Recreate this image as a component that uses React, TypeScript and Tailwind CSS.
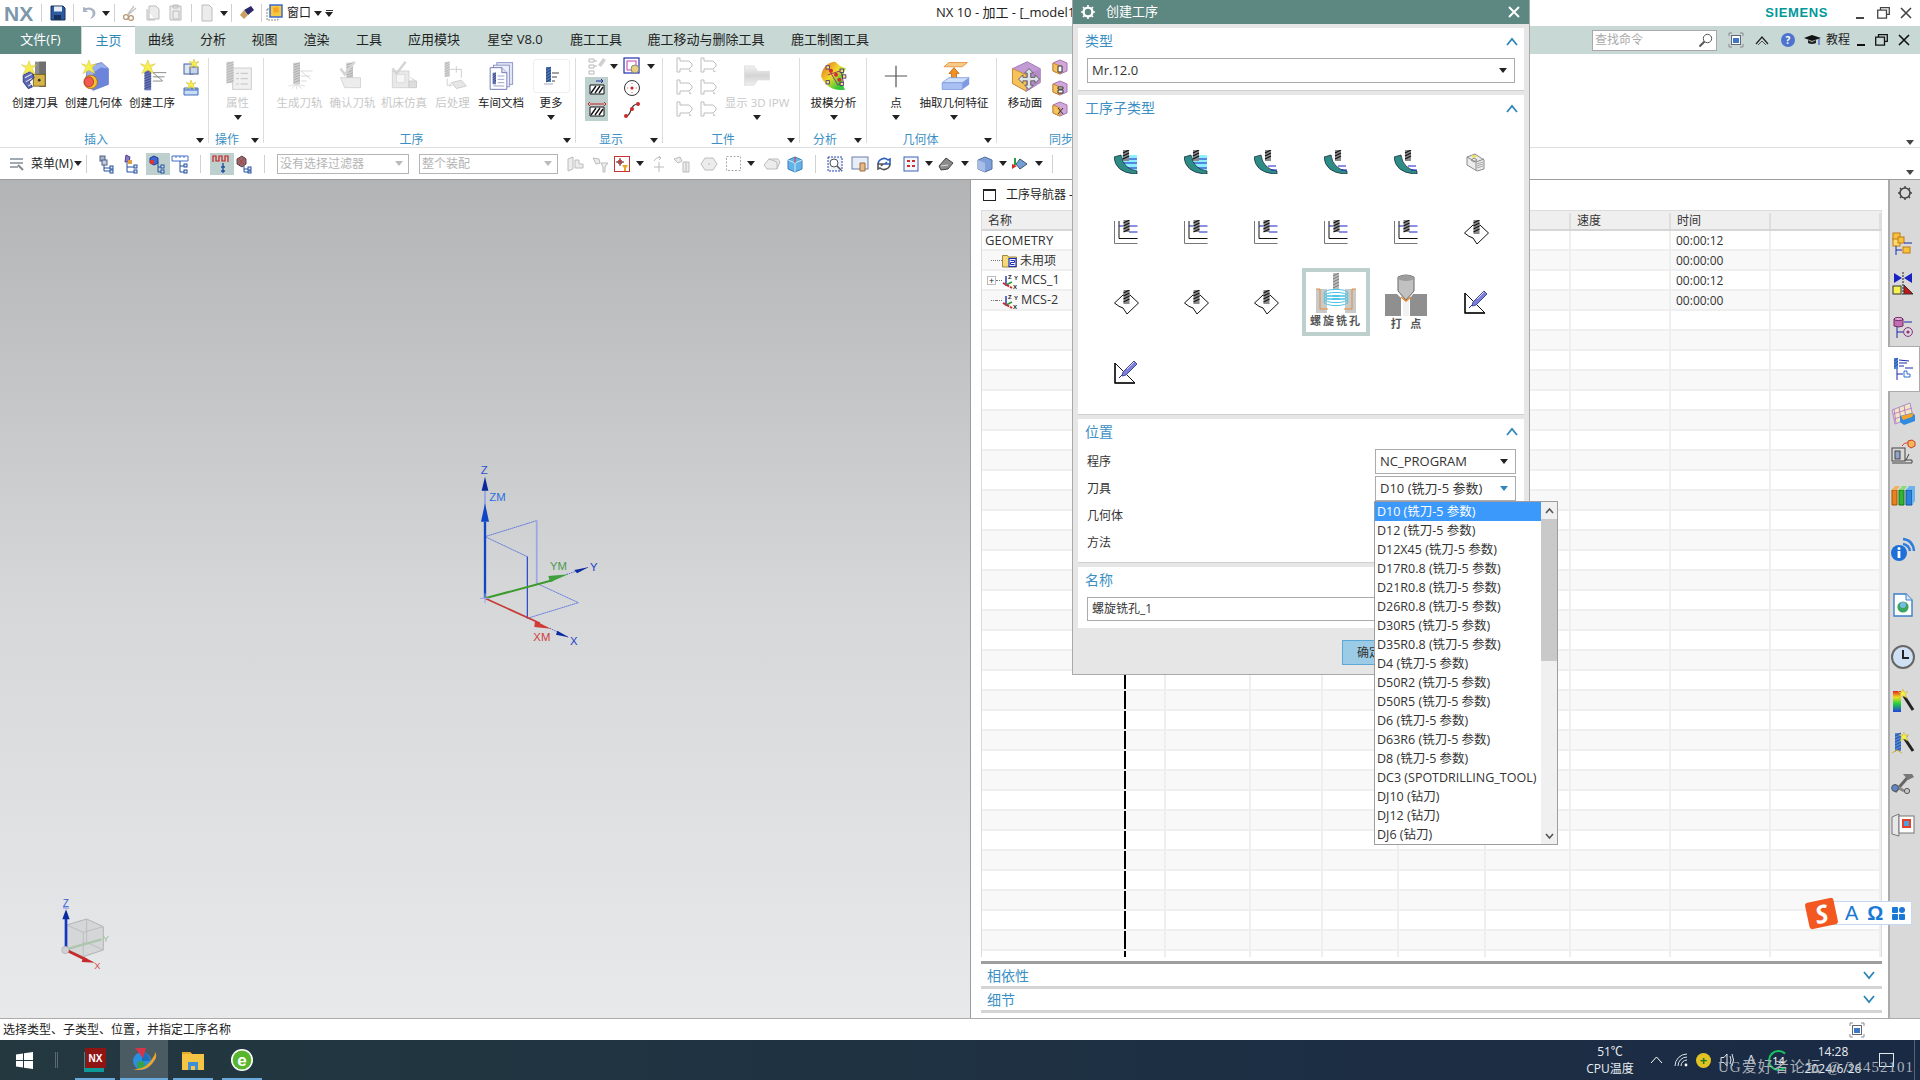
import type { ReactNode } from "react";

type Box = { className?: string; children?: ReactNode };

const toolItems = [
  "D10 (铣刀-5 参数)",
  "D12 (铣刀-5 参数)",
  "D12X45 (铣刀-5 参数)",
  "D17R0.8 (铣刀-5 参数)",
  "D21R0.8 (铣刀-5 参数)",
  "D26R0.8 (铣刀-5 参数)",
  "D30R5 (铣刀-5 参数)",
  "D35R0.8 (铣刀-5 参数)",
  "D4 (铣刀-5 参数)",
  "D50R2 (铣刀-5 参数)",
  "D50R5 (铣刀-5 参数)",
  "D6 (铣刀-5 参数)",
  "D63R6 (铣刀-5 参数)",
  "D8 (铣刀-5 参数)",
  "DC3 (SPOTDRILLING_TOOL)",
  "DJ10 (钻刀)",
  "DJ12 (钻刀)",
  "DJ6 (钻刀)",
];

const tabs = [
  { label: "曲线", w: "w-[52px]" },
  { label: "分析", w: "w-[52px]" },
  { label: "视图", w: "w-[51px]" },
  { label: "渲染", w: "w-[53px]" },
  { label: "工具", w: "w-[52px]" },
  { label: "应用模块", w: "w-[78px]" },
  { label: "星空 V8.0", w: "w-[84px]" },
  { label: "鹿工工具", w: "w-[78px]" },
  { label: "鹿工移动与删除工具", w: "w-[142px]" },
  { label: "鹿工制图工具", w: "w-[106px]" },
];

const columns = [
  "w-[144px] border-r-black",
  "w-[40px]",
  "w-[85px]",
  "w-[72px]",
  "w-[76px]",
  "w-[87px]",
  "w-[85px]",
  "w-[100px]",
  "w-[100px]",
  "w-[110px]",
];

const times = ["00:00:12", "00:00:00", "00:00:12", "00:00:00"];
const rows = Array.from({ length: 37 }, (_, i) => i);

function Caret({ color = "#222" }: { color?: string }) {
  return (
    <svg width="8" height="5" viewBox="0 0 8 5" className="shrink-0">
      <path d="M0 0h8L4 5z" fill={color} />
    </svg>
  );
}

function Slot({ className = "", children }: Box) {
  return <div className={`flex shrink-0 items-center justify-center ${className}`}>{children}</div>;
}

function Chevron({ up }: { up?: boolean }) {
  return (
    <svg width="12" height="9" viewBox="0 0 12 9" className="shrink-0">
      <path d={up ? "M1 8l5-6 5 6" : "M1 1l5 6 5-6"} fill="none" stroke="#2f87b8" strokeWidth="1.8" />
    </svg>
  );
}

function Ico({ s = 20, v = 20, children, className }: { s?: number; v?: number; children: ReactNode; className?: string }) {
  return (
    <svg width={s} height={s} viewBox={`0 0 ${v} ${v}`} className={`shrink-0 ${className ?? ""}`}>
      {children}
    </svg>
  );
}

function Star({ x, y, r = 6 }: { x: number; y: number; r?: number }) {
  return (
    <path
      d={`M${x} ${y - r}L${x + r * 0.25} ${y - r * 0.3}L${x + r} ${y - r * 0.5}L${x + r * 0.4} ${y}L${x + r * 0.8} ${y + r * 0.8}L${x} ${y + r * 0.35}L${x - r * 0.8} ${y + r * 0.8}L${x - r * 0.4} ${y}L${x - r} ${y - r * 0.5}L${x - r * 0.25} ${y - r * 0.3}Z`}
      fill="#f7ef4d"
      stroke="#c9b52a"
      strokeWidth="0.5"
    />
  );
}

function Mill({ x, y, w = 6, h = 20, color = "#6a78b8", line = "#2d3570", weight = 0.8 }: { x: number; y: number; w?: number; h?: number; color?: string; line?: string; weight?: number }) {
  const n = Math.floor(h / 3);
  return (
    <g>
      <rect x={x} y={y} width={w} height={h} fill={color} />
      {Array.from({ length: n }, (_, i) => (
        <path key={i} d={`M${x} ${y + i * 3 + 3}L${x + w} ${y + i * 3}`} stroke={line} strokeWidth={weight} />
      ))}
    </g>
  );
}

function CreateToolIcon() {
  return (
    <Ico s={32} v={38}>
      <rect x="19" y="2" width="13" height="16" fill="#8d8d8d" />
      <rect x="24" y="2" width="8" height="30" fill="#6f6f6f" />
      <rect x="17" y="17" width="14" height="14" fill="#d8b54a" stroke="#6b5a1a" />
      <circle cx="24" cy="24" r="1.6" fill="#333" />
      <path d="M5 18l10-5 3 8-6 5 4 6-5 2-6-8z" fill="#5b66b4" stroke="#2b3470" />
      <path d="M7 21l8-4M8 26l7-4M11 31l4-3" stroke="#e8e8f5" strokeWidth="1.2" />
      <Star x={12} y={10} r={9} />
    </Ico>
  );
}

function CreateGeomIcon() {
  return (
    <Ico s={32} v={38}>
      <path d="M11 8l17-5 8 7v19l-18 7-9-7z" fill="#9ab0ec" stroke="#6c7cc0" />
      <path d="M27 9l9 1v19l-18 7V15z" fill="#6d84dc" />
      <ellipse cx="15" cy="26" rx="8" ry="8" fill="#f4c22d" stroke="#b36a15" />
      <ellipse cx="13" cy="26" rx="5.5" ry="6" fill="#f25c50" stroke="#a33" />
      <Star x={13} y={9} r={9} />
    </Ico>
  );
}

function CreateOperIcon() {
  return (
    <Ico s={32} v={38}>
      <path d="M20 15h16M20 20h14M20 25h11M20 15l12 10" stroke="#777" fill="none" />
      <Mill x={10} y={10} w={8} h={26} />
      <Star x={14} y={9} r={9} />
    </Ico>
  );
}

function GrayMill({ tail }: { tail?: ReactNode }) {
  return (
    <Ico s={30} v={36}>
      <Mill x={10} y={2} w={8} h={26} color="#cfcfcf" line="#9c9c9c" />
      {tail}
    </Ico>
  );
}

function AttrIcon() {
  return (
    <Ico s={32} v={36}>
      <rect x="12" y="9" width="21" height="24" fill="#f0f0f0" stroke="#c9c9c9" />
      <path d="M16 15h3M21 15h8M16 21h3M21 21h8M16 27h3M21 27h8" stroke="#bcbcbc" />
      <Mill x={5} y={2} w={8} h={24} color="#cfcfcf" line="#a8a8a8" />
    </Ico>
  );
}

function ShopDocIcon() {
  return (
    <Ico s={30} v={36}>
      <rect x="13" y="2" width="19" height="26" fill="#e3e6f6" stroke="#7e88c0" />
      <rect x="9" y="5" width="19" height="26" fill="#eef0fb" stroke="#7e88c0" />
      <path d="M5 8h14l6 6v20H5z" fill="#fff" stroke="#5b66a8" />
      <path d="M19 8v6h6" fill="#dfe3f6" stroke="#5b66a8" />
      <path d="M14 18h8M14 22h8M14 26h8M9 30h13" stroke="#8a93c7" />
      <Mill x={8} y={14} w={4} h={14} />
    </Ico>
  );
}

function MoreIcon() {
  return (
    <Ico s={20} v={20}>
      <path d="M11 7h7M11 11h5M11 15h3" stroke="#444" />
      <Mill x={5} y={1} w={5} h={15} color="#4d76b8" line="#20335c" />
      <path d="M3 18h9" stroke="#9ba8c8" />
    </Ico>
  );
}

function DisplayPair({ kind }: { kind: "flow" | "check" | "machine" | "post" }) {
  if (kind === "check")
    return (
      <GrayMill
        tail={
          <>
            <path d="M3 9l5 7L20 1" stroke="#d4d4d4" strokeWidth="3" fill="none" />
            <path d="M3 20h24v12H8z" fill="#ececec" stroke="#d0d0d0" />
          </>
        }
      />
    );
  if (kind === "machine")
    return (
      <Ico s={30} v={36}>
        <path d="M4 12h20v20H4z" fill="#e9e9e9" stroke="#cfcfcf" />
        <path d="M9 16h10v10H9z" fill="#f6f6f6" stroke="#d7d7d7" />
        <path d="M24 24h9v8h-9zM26 20l6 4" fill="#dedede" stroke="#c8c8c8" />
        <path d="M4 9l5 6L20 1" stroke="#d4d4d4" strokeWidth="3" fill="none" />
      </Ico>
    );
  if (kind === "post")
    return (
      <Ico s={30} v={36}>
        <Mill x={8} y={1} w={6} h={18} color="#d3d3d3" line="#a8a8a8" />
        <path d="M14 10h14v10M22 6v8" stroke="#c8c8c8" fill="none" />
        <path d="M16 26l12-3 6 7-12 3z" fill="#e6e6e6" stroke="#c6c6c6" />
        <path d="M11 21v8h5l-2-2m2 2l-2 2" stroke="#c8c8c8" fill="none" />
      </Ico>
    );
  return (
    <GrayMill
      tail={
        <>
          <path d="M19 12h14M19 18h11M19 24h7M19 12l12 10" stroke="#d2d2d2" fill="none" />
          <path d="M4 30l10-2 10 2M14 28v6M8 33l6-5 6 5" stroke="#dadada" fill="none" />
        </>
      }
    />
  );
}

function WorkpieceIcon() {
  return (
    <Ico s={20} v={20}>
      <path d="M2 3h3v3h9l3 3v2l-3 3H5v3H2z" fill="none" stroke="#bdbdbd" />
      <path d="M14 14l3 3-3 0z" fill="#d0d0d0" />
    </Ico>
  );
}

function BigIpw() {
  return (
    <Ico s={28} v={36}>
      <defs>
        <linearGradient id="ipw" x1="0" y1="0" x2="0" y2="1">
          <stop offset="0" stopColor="#f2f2f2" />
          <stop offset="0.5" stopColor="#d4d4d4" />
          <stop offset="1" stopColor="#efefef" />
        </linearGradient>
      </defs>
      <path d="M2 5h12l5 7h15v11H19l-5 7H2z" fill="url(#ipw)" stroke="#dcdcdc" />
    </Ico>
  );
}

function DraftIcon() {
  return (
    <Ico s={33} v={40}>
      <defs>
        <linearGradient id="dr" x1="0" y1="0" x2="1" y2="1">
          <stop offset="0" stopColor="#e25c20" />
          <stop offset="0.45" stopColor="#f2d92c" />
          <stop offset="0.8" stopColor="#35c93b" />
        </linearGradient>
      </defs>
      <path d="M5 20C6 8 15 2 22 2c4 4 8 7 13 8-5 9-5 19-1 26-12 2-24-3-29-16z" fill="url(#dr)" />
      <path d="M13 9l12 21 7-3-3-14-16 5" stroke="#8b1f6c" fill="none" />
      {[[13, 9], [30, 13], [13, 27], [30, 29], [33, 20]].map(([x, y]) => (
        <rect key={`${x}-${y}`} x={x - 2} y={y - 2} width="4" height="4" fill="#f5e66c" stroke="#432a7a" />
      ))}
      <circle cx="23" cy="18" r="2.4" fill="#d52b2b" />
      <circle cx="17" cy="13" r="2.4" fill="#d52b2b" />
      <circle cx="27" cy="24" r="2.4" fill="#d52b2b" />
    </Ico>
  );
}

function PointIcon() {
  return (
    <Ico s={28} v={30}>
      <path d="M15 4v23M3 15h24" stroke="#555" strokeWidth="1.3" />
    </Ico>
  );
}

function ExtractIcon() {
  return (
    <Ico s={32} v={38}>
      <path d="M7 8l6-5h22l-6 5z" fill="#f6cb86" stroke="#e38b3d" />
      <path d="M16 22V16h-3l6-7 6 7h-3v6z" fill="#ef9224" stroke="#c46a10" />
      <path d="M5 27l8-6h24l-8 6z" fill="#cfe0fb" stroke="#7f9be0" />
      <path d="M5 27h24v8H5z" fill="#a9c0f2" stroke="#7f9be0" />
      <path d="M29 27l8-6v8l-8 6z" fill="#7e9ae2" />
    </Ico>
  );
}

function MoveFaceIcon() {
  return (
    <Ico s={33} v={38}>
      <path d="M4 10L21 2l15 8v16l-16 10L4 27z" fill="#c29bd5" stroke="#9d6fb8" />
      <path d="M4 10l16 7v19L4 27z" fill="#f6c25a" stroke="#c98a28" />
      <path d="M20 17l16-7v16L20 36z" fill="#b68cc9" />
      <path d="M23 10l5 5h-3v5h5v-3l5 5-5 5v-3h-5v5h3l-5 5-5-5h3v-5h-5v3l-5-5 5-5v3h5v-5h-3z" fill="#dfe3ea" stroke="#555" />
    </Ico>
  );
}

function MoveFaceSmall({ mark }: { mark: string }) {
  return (
    <Ico s={16} v={16}>
      <path d="M1 4l7-3 7 3v8l-7 3-7-3z" fill="#d1a7d9" stroke="#a474b2" />
      <path d="M1 4l7 3v8l-7-3z" fill="#f6c25a" stroke="#c98a28" />
      <path d={mark} stroke="#333" fill="#fff" />
    </Ico>
  );
}

function BigBtn({ w, icon, label, disabled, caret }: { w: string; icon: ReactNode; label: string; disabled?: boolean; caret?: boolean }) {
  return (
    <div className={`flex shrink-0 flex-col items-center ${w}`}>
      <div className="flex h-[34px] items-center justify-center">{icon}</div>
      <div className={`mt-[2px] h-[16px] whitespace-nowrap text-[11.5px] leading-[16px] ${disabled ? "text-[#c8c8c8]" : "text-[#222]"}`}>{label}</div>
      {caret && (
        <div className="mt-[3px] flex h-[6px] items-center">
          <Caret />
        </div>
      )}
    </div>
  );
}

function Group({ w, label, last, labelClass = "mr-[12px]", children }: { w: string; label: string; last?: boolean; labelClass?: string; children: ReactNode }) {
  return (
    <div className={`my-[4px] flex shrink-0 flex-col ${w} ${last ? "" : "border-r border-[#dcdcdc]"}`}>
      <div className="flex h-[75px] shrink-0">{children}</div>
      <div className="grid h-[14px] shrink-0 grid-cols-[1fr_auto_1fr] items-center pr-[4px]">
        <span />
        <span className={`text-[12px] leading-[14px] text-[#3b8fc4] ${labelClass}`}>{label}</span>
        <span className="justify-self-end">
          <Caret />
        </span>
      </div>
    </div>
  );
}

function NavIcon({ kind }: { kind: number }) {
  if (kind === 1)
    return (
      <Ico s={20} v={20}>
        <rect x="3" y="2" width="5" height="5" fill="#a9b6c9" stroke="#4f5f85" />
        <rect x="5" y="6" width="5" height="5" fill="#c4cedd" stroke="#4f5f85" />
        <path d="M7 11v6h6M7 14h6" stroke="#204f9e" fill="none" />
        <rect x="13" y="12" width="3" height="3" fill="#dfe6f2" stroke="#204f9e" />
        <rect x="13" y="16" width="3" height="3" fill="#dfe6f2" stroke="#204f9e" />
      </Ico>
    );
  if (kind === 2)
    return (
      <Ico s={20} v={20}>
        <path d="M5 1l4 2-1 5H4z" fill="#8e77c6" stroke="#513f8d" />
        <rect x="7" y="6" width="4" height="4" fill="#e0a040" />
        <path d="M6 9v9h7M6 13h7" stroke="#204f9e" fill="none" />
        <rect x="13" y="11" width="3" height="3" fill="#dfe6f2" stroke="#204f9e" />
        <rect x="13" y="16" width="3" height="3" fill="#dfe6f2" stroke="#204f9e" />
      </Ico>
    );
  if (kind === 3)
    return (
      <Ico s={20} v={20}>
        <path d="M2 4l4-2 4 2v5l-4 2-4-2z" fill="#3d67d6" stroke="#1c3b95" />
        <circle cx="4" cy="8" r="2.3" fill="#e0342c" />
        <path d="M10 8v10h4M10 13h4" stroke="#204f9e" fill="none" />
        <rect x="13" y="11" width="3" height="3" fill="#dfe6f2" stroke="#204f9e" />
        <rect x="13" y="16" width="3" height="3" fill="#dfe6f2" stroke="#204f9e" />
      </Ico>
    );
  if (kind === 4)
    return (
      <Ico s={20} v={20}>
        <path d="M1 2h16M1 2v5h16V2M5 2v2M9 2v2M13 2v2" stroke="#3f6ec4" fill="none" />
        <path d="M9 7v11h4M9 12h4" stroke="#204f9e" fill="none" />
        <rect x="13" y="10" width="3" height="3" fill="#dfe6f2" stroke="#204f9e" />
        <rect x="13" y="16" width="3" height="3" fill="#dfe6f2" stroke="#204f9e" />
      </Ico>
    );
  if (kind === 5)
    return (
      <Ico s={22} v={22}>
        <path d="M2 9V3h3v5h3V3h3v5h3V3h3v6" stroke="#c81f1f" fill="none" strokeWidth="1.2" />
        <path d="M12 10v10M10 14h4M10 18h4" stroke="#204f9e" fill="none" strokeWidth="1.4" />
      </Ico>
    );
  return (
    <Ico s={20} v={20}>
      <path d="M2 5l5-3 4 3v5l-4 3-5-3z" fill="#8e6a70" stroke="#5d4347" />
      <path d="M3 4l7 7M10 3L4 11" stroke="#c03838" />
      <path d="M9 12v6h4M9 15h4" stroke="#204f9e" fill="none" />
      <rect x="13" y="13" width="3" height="3" fill="#dfe6f2" stroke="#204f9e" />
      <rect x="13" y="17" width="3" height="2" fill="#dfe6f2" stroke="#204f9e" />
    </Ico>
  );
}

function SmallGray({ d }: { d: string }) {
  return (
    <Ico s={20} v={20}>
      <path d={d} fill="#ececec" stroke="#bcbcbc" />
    </Ico>
  );
}

function Select({ value, active, className = "" }: { value: string; active?: boolean; className?: string }) {
  return (
    <div className={`flex items-center justify-between border border-[#ababab] bg-white pl-[4px] pr-[7px] ${className}`}>
      <span className="whitespace-nowrap text-[13px] text-[#333]">{value}</span>
      <Caret color={active ? "#2f87b8" : "#222"} />
    </div>
  );
}

function SectionHead({ label, open = true, className = "" }: { label: string; open?: boolean; className?: string }) {
  return (
    <div className={`flex items-center justify-between pl-[7px] pr-[6px] ${className}`}>
      <span className="text-[14px] leading-[20px] text-[#3b8fc4]">{label}</span>
      <Chevron up={open} />
    </div>
  );
}

function SubMill({ x = 8, y = 0, h = 11 }: { x?: number; y?: number; h?: number }) {
  return <Mill x={x} y={y} w={6} h={h} color="#8a8a8a" line="#111" weight={1.1} />;
}

const arcPath = "M0 7Q1 22 20 24h3v-3Q9 19 7 5z";

function SubCyan() {
  return (
    <Ico s={24} v={24}>
      <rect x="8" y="5" width="15" height="16" fill="#8ef0ff" />
      <path d="M8 9h15M8 13h15M8 18h15" stroke="#1620c8" />
      <path d={arcPath} fill="#2e8b85" stroke="#123" strokeWidth="0.7" />
      <SubMill x={9} />
    </Ico>
  );
}

function SubArc() {
  return (
    <Ico s={24} v={24}>
      <path d={arcPath} fill="#2e8b85" stroke="#123" strokeWidth="0.7" />
      <path d="M14 16h8M17 20h6" stroke="#1620c8" />
      <SubMill x={11} />
    </Ico>
  );
}

function SubBlock() {
  return (
    <Ico s={20} v={20}>
      <path d="M1 5l8-3 9 6v9l-7 2-10-6z" fill="#ececec" stroke="#8a8a8a" />
      <path d="M1 5l9 5v8M10 10l8-3M5 8l3-2 3 2-3 2z" fill="none" stroke="#8a8a8a" />
      <path d="M5 4l4-1 2 2-3 1z" fill="#eee44a" />
      <path d="M11 12l6-2M11 14l6-2M11 16l6-2" stroke="#a8a8a8" />
    </Ico>
  );
}

function SubPocket() {
  return (
    <Ico s={24} v={24}>
      <path d="M0.5 1v22.5h23" fill="none" stroke="#777" />
      <path d="M5 1v17.5h18.5" fill="none" stroke="#111" />
      <path d="M5 6h4M15 6h8.5M15 12h8.5" stroke="#1620c8" />
      <SubMill x={9.5} h={12} />
    </Ico>
  );
}

function SubDrill() {
  return (
    <Ico s={25} v={25}>
      <path d="M0.5 13L9 5h7l8.5 8L13 24l-4-6q-4-1-8.500-5z" fill="#fff" stroke="#111" />
      <SubMill x={9.5} y={0} h={14} />
    </Ico>
  );
}

function SubPen() {
  return (
    <Ico s={24} v={24}>
      <path d="M1 3l20 20H1z" fill="#fff" stroke="#111" />
      <path d="M1 3v20h20" fill="none" stroke="#111" strokeWidth="1.4" />
      <path d="M5 18l7-7" stroke="#1620c8" />
      <path d="M9 12L20 1l3 3-11 11-4 1z" fill="#7c80d8" stroke="#44479e" />
      <path d="M13 9l7-7" stroke="#dcdcf6" />
    </Ico>
  );
}

function HelixTile() {
  return (
    <svg width="44" height="40" viewBox="0 0 44 40" className="shrink-0">
      <rect x="2" y="16" width="11" height="24" fill="#c9c9c9" />
      <rect x="31" y="16" width="11" height="24" fill="#c9c9c9" />
      <path d="M2 16h4v20h32V16h4" fill="none" stroke="#e08d3e" strokeWidth="1" />
      <rect x="14" y="28" width="16" height="12" fill="#fff" />
      <Mill x={19} y={0} w={6} h={16} color="#bcbcbc" line="#666" />
      {[20, 23, 26, 29].map((y) => (
        <ellipse key={y} cx="22" cy={y} rx="12" ry="3.6" fill="none" stroke="#49c3e6" strokeWidth="1" />
      ))}
    </svg>
  );
}

function SpotTile() {
  return (
    <svg width="42" height="42" viewBox="0 0 42 42" className="shrink-0">
      <path d="M0 20h12l4 4v18H0zM42 20H28l-3 4v18h17z" fill="#8f8f8f" />
      <path d="M14 20h14l-4 6v16h-6V26z" fill="#f2f2f2" />
      <path d="M13 3q8-4 16 0v14l-8 9-8-9z" fill="#c1c1c1" stroke="#666" />
      <ellipse cx="21" cy="4" rx="8" ry="3" fill="#9c9c9c" />
      <path d="M16 23l5 4 5-4" fill="none" stroke="#ea8a2f" strokeWidth="1.4" />
    </svg>
  );
}

function SideIcon({ kind }: { kind: number }) {
  switch (kind) {
    case 0:
      return (
        <Ico s={24} v={24}>
          <rect x="2" y="2" width="7" height="7" fill="#f9c23c" stroke="#c07a10" />
          <rect x="2" y="8" width="7" height="7" fill="#fadc70" stroke="#c07a10" />
          <rect x="7" y="6" width="6" height="6" fill="#f9c23c" stroke="#c07a10" />
          <path d="M5 15v9M5 19h6M13 12h8" stroke="#1b2aa8" fill="none" />
          <rect x="12" y="16" width="7" height="6" fill="#f9c23c" stroke="#c07a10" />
        </Ico>
      );
    case 1:
      return (
        <Ico s={24} v={24}>
          <path d="M3 1l8 5-8 5zM21 1l-8 5 8 5z" fill="#1922c2" />
          <path d="M12 0v24" stroke="#222" strokeDasharray="2 1" />
          <rect x="2" y="14" width="8" height="8" fill="#f6f34f" stroke="#333" />
          <path d="M13 22V13l9 9z" fill="#c81515" stroke="#333" />
        </Ico>
      );
    case 2:
      return (
        <Ico s={24} v={24}>
          <path d="M3 3q5-2 9 0v7q-4 2-9 0z" fill="#c66fb0" stroke="#6e2c69" />
          <ellipse cx="7.5" cy="3" rx="4.5" ry="1.6" fill="#e4aed8" stroke="#6e2c69" />
          <path d="M13 6h8M6 11v11M6 16h6" stroke="#1b2aa8" fill="none" />
          <circle cx="17" cy="16" r="4.4" fill="none" stroke="#8e2e80" />
          <circle cx="17" cy="16" r="1.6" fill="#8e2e80" />
        </Ico>
      );
    case 3:
      return (
        <Ico s={24} v={24}>
          <Mill x={3} y={1} w={4} h={11} color="#4f86d8" line="#1c3b95" />
          <path d="M8 3l10 1M8 6h8M8 9h5M14 11h8M6 12v11M6 17h6" stroke="#1b2aa8" fill="none" />
          <path d="M13 14h3v3h3v3h-6z" fill="#fff" stroke="#2f6ed0" />
        </Ico>
      );
    case 4:
      return (
        <Ico s={26} v={26}>
          <path d="M2 9L20 2l3 14-18 7z" fill="#f1e7c4" stroke="#a98fd0" />
          <path d="M4 8l2 14M9 6l2 14M14 4l2 14M3 13l19-6M4 18l19-6" stroke="#c080c8" />
          <path d="M10 15l12-3 3 2v6l-11 4-4-3z" fill="#2f8be0" />
          <path d="M11 15l13-3-2 4-9 3z" fill="#f5a32a" />
        </Ico>
      );
    case 5:
      return (
        <Ico s={26} v={26}>
          <rect x="2" y="9" width="13" height="13" fill="#d9d9d9" stroke="#444" />
          <rect x="5" y="12" width="5" height="8" fill="#8fa4c8" stroke="#444" />
          <path d="M15 21h7v3H2M19 15l-3 6" stroke="#444" fill="none" />
          <path d="M12 7q2-4 6-3" stroke="#e0451f" fill="none" />
          <path d="M18 2l4-1 3 2v4l-4 2-3-2z" fill="#f7b55a" stroke="#c8432a" />
        </Ico>
      );
    case 6:
      return (
        <Ico s={26} v={26}>
          <path d="M2 8h5v15H2z" fill="#e8821e" stroke="#a85500" />
          <path d="M2 8l3-4h5L7 8z" fill="#f3b064" />
          <path d="M9 8h5v15H9z" fill="#37b237" stroke="#0f7a0f" />
          <path d="M9 8l3-4h5l-3 4z" fill="#88dc78" />
          <path d="M16 8h6v15h-6z" fill="#2a82dd" stroke="#11549b" />
          <path d="M16 8l3-4h6l-3 4zM22 8l3-4v15l-3 4z" fill="#6db4ef" />
        </Ico>
      );
    case 7:
      return (
        <Ico s={26} v={26}>
          <path d="M13 3q10 1 11 12" fill="none" stroke="#2f7ddc" strokeWidth="2.4" />
          <path d="M13 8q6 1 7 7" fill="none" stroke="#2f7ddc" strokeWidth="2.4" />
          <circle cx="9" cy="17" r="8" fill="#1f6fd8" />
          <circle cx="9" cy="12.5" r="1.5" fill="#fff" />
          <rect x="7.6" y="15" width="2.8" height="7" fill="#fff" />
        </Ico>
      );
    case 8:
      return (
        <Ico s={26} v={26}>
          <path d="M4 2h12l6 6v16H4z" fill="#fff" stroke="#3c7fc8" strokeWidth="1.4" />
          <path d="M16 2v6h6" fill="#d6e7f8" stroke="#3c7fc8" />
          <circle cx="13" cy="15" r="5.6" fill="#3aa55c" />
          <circle cx="13" cy="13" r="3" fill="#7ab8e8" />
        </Ico>
      );
    case 9:
      return (
        <Ico s={26} v={26}>
          <circle cx="13" cy="13" r="11" fill="#cfe0f4" stroke="#666" strokeWidth="2" />
          <path d="M13 6v8h6" fill="none" stroke="#222" strokeWidth="2" />
        </Ico>
      );
    case 10:
      return (
        <Ico s={26} v={26}>
          <defs>
            <linearGradient id="rb" x1="0" y1="0" x2="0" y2="1">
              <stop offset="0" stopColor="#e02020" />
              <stop offset="0.3" stopColor="#f0e020" />
              <stop offset="0.6" stopColor="#20d040" />
              <stop offset="1" stopColor="#2040e0" />
            </linearGradient>
          </defs>
          <rect x="3" y="2" width="8" height="21" fill="url(#rb)" />
          <path d="M14 7l9 14" stroke="#222" strokeWidth="3" />
          <Star x={13} y={5} r={5} />
        </Ico>
      );
    case 11:
      return (
        <Ico s={26} v={26}>
          <Mill x={5} y={3} w={6} h={18} color="#4f86d8" line="#1c3b95" />
          <path d="M12 6h6M12 9h4" stroke="#3c78d0" />
          <path d="M2 23l5-3 5 3" stroke="#d8b020" fill="none" />
          <path d="M15 9l8 12" stroke="#222" strokeWidth="3" />
          <Star x={14} y={7} r={5} />
        </Ico>
      );
    case 12:
      return (
        <Ico s={26} v={26}>
          <path d="M5 22l13-15" stroke="#666" strokeWidth="3" />
          <path d="M13 4l9 0 2 3-6 3z" fill="#777" />
          <path d="M4 15l10 6" stroke="#888" strokeWidth="3" />
          <circle cx="5" cy="18" r="3.4" fill="#5f86c8" stroke="#555" />
          <circle cx="17" cy="21" r="2.6" fill="#c8c8c8" stroke="#555" />
        </Ico>
      );
    default:
      return (
        <Ico s={26} v={26}>
          <path d="M2 5l7-3v22l-7-2z" fill="#e8e8e8" stroke="#777" />
          <rect x="9" y="4" width="15" height="17" fill="#fff" stroke="#777" />
          <rect x="12" y="7" width="9" height="9" fill="#e7412c" />
          <rect x="14" y="9" width="5" height="5" fill="#4aa2e0" />
        </Ico>
      );
  }
}

function WinControls({ dark }: { dark?: boolean }) {
  const c = dark ? "#111" : "#444";
  return (
    <div className="flex items-center">
      <Slot className={dark ? "w-[20px]" : "w-[24px]"}>
        <div className={`mt-[9px] h-[2px] w-[8px] ${dark ? "bg-[#111]" : "bg-[#444]"}`} />
      </Slot>
      <Slot className={dark ? "w-[21px]" : "w-[22px]"}>
        <svg width="13" height="12" viewBox="0 0 13 12">
          <path d="M3.5 3V.7h8.8v6.6H9.5M.7 3.2h8.8v8H.7z" fill="none" stroke={c} strokeWidth="1.3" />
        </svg>
      </Slot>
      <Slot className="w-[24px]">
        <svg width="12" height="12" viewBox="0 0 12 12">
          <path d="M1 1l10 10M11 1L1 11" stroke={c} strokeWidth="1.6" />
        </svg>
      </Slot>
    </div>
  );
}

function ScreenIcon() {
  return (
    <svg width="16" height="16" viewBox="0 0 16 16" className="shrink-0">
      <path d="M1 4V1h3M12 1h3v3M15 12v3h-3M4 15H1v-3" fill="none" stroke="#8a8a8a" />
      <rect x="3.5" y="3.5" width="9" height="9" fill="#fff" stroke="#667" />
      <rect x="5" y="6" width="6" height="5" fill="#3d77c8" />
    </svg>
  );
}

function TitleBar() {
  return (
    <div className="flex h-[26px] shrink-0 items-center bg-white">
      <span className="w-[41px] pl-[4px] font-['Liberation_Sans',sans-serif] text-[21px] font-bold leading-none text-[#7d97aa]">NX</span>
      <div className="h-[18px] w-px bg-[#d0d0d0]" />
      <Slot className="w-[31px]">
        <Ico s={16} v={16}>
          <path d="M1 1h12l2 2v12H1z" fill="#2c5aa0" stroke="#16305c" />
          <rect x="4" y="1.5" width="8" height="5" fill="#e6edf7" />
          <rect x="4" y="10" width="7" height="5" fill="#16305c" />
        </Ico>
      </Slot>
      <div className="h-[18px] w-px bg-[#d0d0d0]" />
      <Slot className="w-[28px]">
        <Ico s={16} v={16}>
          <path d="M3 2v5h5L6 5q4-1 6 1 2 4-2 8 7-2 5-8-3-5-9-3z" fill="#a9b3c4" />
        </Ico>
      </Slot>
      <Slot className="w-[8px]">
        <Caret />
      </Slot>
      <div className="ml-[4px] h-[18px] w-px bg-[#d0d0d0]" />
      <Slot className="w-[29px]">
        <Ico s={16} v={16}>
          <path d="M12 1L6 9M14 3L6 10" stroke="#c4c4c4" strokeWidth="1.4" />
          <circle cx="4" cy="12" r="2.4" fill="none" stroke="#b89a7a" strokeWidth="1.4" />
          <circle cx="9" cy="13" r="2.4" fill="none" stroke="#b89a7a" strokeWidth="1.4" />
        </Ico>
      </Slot>
      <Slot className="w-[20px]">
        <SmallGray d="M5 3h7l3 3v10H5zM3 6v11h8" />
      </Slot>
      <Slot className="w-[24px]">
        <SmallGray d="M4 3h11v14H4zM7 2h5v3H7zM7 8h6v8H7z" />
      </Slot>
      <div className="ml-[3px] h-[18px] w-px bg-[#d0d0d0]" />
      <Slot className="w-[27px]">
        <SmallGray d="M6 2h7l3 3v13H6z" />
      </Slot>
      <Slot className="w-[10px]">
        <Caret />
      </Slot>
      <div className="ml-[2px] h-[18px] w-px bg-[#d0d0d0]" />
      <Slot className="w-[29px]">
        <Ico s={18} v={18}>
          <path d="M6 6l7-4 3 4-6 5z" fill="#2a2a6a" />
          <path d="M2 11l4-5 4 5-4 4z" fill="#c9a060" />
        </Ico>
      </Slot>
      <div className="h-[18px] w-px bg-[#d0d0d0]" />
      <Slot className="w-[25px]">
        <Ico s={18} v={18}>
          <rect x="1" y="5" width="11" height="11" fill="#fff" stroke="#888" strokeDasharray="2 1" />
          <rect x="4" y="1" width="12" height="12" fill="#f5c842" stroke="#2f62d0" strokeWidth="1.4" />
          <path d="M7 4l5-1 1 5-5 1z" fill="#f7a32a" />
        </Ico>
      </Slot>
      <span className="text-[12px] text-[#222]">窗口</span>
      <Slot className="ml-[3px] w-[8px]">
        <Caret />
      </Slot>
      <Slot className="ml-[3px] w-[8px]">
        <div className="flex flex-col items-center gap-[1px]">
          <div className="h-px w-[7px] bg-[#333]" />
          <Caret />
        </div>
      </Slot>
      <span className="ml-[603px] w-[135px] whitespace-nowrap text-[13px] text-[#222]">NX 10 - 加工 - [_model1.prt]</span>
      <span className="ml-auto font-['Liberation_Sans',sans-serif] text-[13px] font-bold tracking-[0.6px] text-[#009999]">SIEMENS</span>
      <div className="ml-[20px] pr-[2px]">
        <WinControls />
      </div>
    </div>
  );
}

function TabBar() {
  return (
    <div className="flex h-[28px] shrink-0 items-stretch bg-[#c7d8d5] text-[13px] text-[#222]">
      <div className="flex w-[81px] items-center justify-center bg-[#5d8781] text-white">文件(F)</div>
      <div className="ml-px flex w-[53px] items-center justify-center border-t border-[#9fb0ae] bg-white text-[#2f87b8]">主页</div>
      {tabs.map((t) => (
        <div key={t.label} className={`flex shrink-0 items-center justify-center whitespace-nowrap ${t.w}`}>
          {t.label}
        </div>
      ))}
      <div className="ml-auto flex items-center">
        <div className="flex h-[21px] w-[125px] items-center justify-between border border-[#a8a8a8] bg-white pl-[2px] pr-[3px] text-[12px] text-[#a9a9a9]">
          查找命令
          <svg width="15" height="15" viewBox="0 0 15 15">
            <circle cx="9.5" cy="5.5" r="4.2" fill="#fff" stroke="#555" />
            <path d="M6.5 8.500L1.500 13.500" stroke="#555" strokeWidth="2" />
          </svg>
        </div>
        <Slot className="ml-[8px] w-[22px]">
          <ScreenIcon />
        </Slot>
        <Slot className="ml-[4px] w-[22px]">
          <svg width="14" height="11" viewBox="0 0 14 11">
            <path d="M1 9l6-7 6 7" fill="none" stroke="#222" strokeWidth="1.2" />
            <path d="M3 10l4-4 4 4" fill="none" stroke="#555" />
          </svg>
        </Slot>
        <Slot className="ml-[4px] w-[22px]">
          <div className="flex h-[14px] w-[14px] items-center justify-center rounded-full bg-[#4e72cf] text-[10px] font-bold leading-none text-white">?</div>
        </Slot>
        <Slot className="ml-[3px] w-[22px]">
          <svg width="17" height="12" viewBox="0 0 17 12">
            <path d="M0 4l8-3 9 3-9 3z" fill="#111" />
            <path d="M4 6v3q4 2 8 0V6L8 8z" fill="#222" />
            <path d="M15 5v6" stroke="#2040c8" />
          </svg>
        </Slot>
        <span className="ml-[2px] text-[12px]">教程</span>
        <div className="pr-[4px] pl-[1px]">
          <WinControls dark />
        </div>
      </div>
    </div>
  );
}

function Ribbon() {
  return (
    <div className="flex h-[94px] shrink-0 border-b border-[#dedede] bg-white">
      <Group w="w-[209px]" label="插入">
        <div className="flex pl-[3px] pt-[1px]">
          <BigBtn w="w-[64px]" icon={<CreateToolIcon />} label="创建刀具" />
          <BigBtn w="w-[53px]" icon={<CreateGeomIcon />} label="创建几何体" />
          <BigBtn w="w-[64px]" icon={<CreateOperIcon />} label="创建工序" />
          <div className="flex w-[14px] flex-col items-center gap-[5px]">
            <Ico s={16} v={16}>
              <rect x="1" y="5" width="9" height="10" fill="#dfe6f2" stroke="#41609e" />
              <rect x="7" y="8" width="8" height="7" fill="#c8d3e8" stroke="#41609e" />
              <Star x={11} y={5} r={5} />
            </Ico>
            <Ico s={16} v={16}>
              <path d="M1 8h14v7H1z" fill="#c8dcf3" stroke="#3f6ec4" />
              <path d="M1 10h14M5 8v2M9 8v2M13 8v2" stroke="#3f6ec4" />
              <Star x={8} y={5} r={5} />
            </Ico>
          </div>
        </div>
      </Group>
      <Group w="w-[55px]" label="操作">
        <div className="flex pl-[2px] pt-[1px]">
          <BigBtn w="w-[53px]" icon={<AttrIcon />} label="属性" disabled caret />
        </div>
      </Group>
      <Group w="w-[312px]" label="工序">
        <div className="flex pl-[9px] pt-[1px]">
          <BigBtn w="w-[53px]" icon={<DisplayPair kind="flow" />} label="生成刀轨" disabled />
          <BigBtn w="w-[53px]" icon={<DisplayPair kind="check" />} label="确认刀轨" disabled />
          <BigBtn w="w-[50px]" icon={<DisplayPair kind="machine" />} label="机床仿真" disabled />
          <BigBtn w="w-[47px]" icon={<DisplayPair kind="post" />} label="后处理" disabled />
          <BigBtn w="w-[50px]" icon={<ShopDocIcon />} label="车间文档" />
          <BigBtn
            w="w-[50px]"
            icon={
              <div className="flex h-[34px] w-[37px] items-center justify-center rounded-[3px] border border-[#eeeeee]">
                <MoreIcon />
              </div>
            }
            label="更多"
            caret
          />
        </div>
      </Group>
      <Group w="w-[87px]" label="显示">
        <div className="-mt-[3px] ml-[9px] grid grid-cols-[23px_12px_24px_14px] grid-rows-[22px_22px_22px]">
          <Slot>
            <Ico s={20} v={20}>
              <path d="M2 3h5v3H2zM2 9h5v3H2zM2 15h5v3H2zM7 5h3M7 10h3" stroke="#b8b8b8" fill="none" />
              <path d="M11 9l5-7 3 2-5 7z" fill="#d0d0d0" />
            </Ico>
          </Slot>
          <Slot>
            <Caret />
          </Slot>
          <Slot>
            <Ico s={18} v={18}>
              <rect x="1" y="1" width="15" height="15" fill="#fff" stroke="#2030b0" strokeWidth="1.2" />
              <rect x="4" y="4" width="9" height="9" fill="none" stroke="#c83fb0" />
              <circle cx="12" cy="12" r="4" fill="#e6cf7c" stroke="#888" />
            </Ico>
          </Slot>
          <Slot>
            <Caret />
          </Slot>
          <Slot className="bg-[#bdd0ce]">
            <Ico s={18} v={18}>
              <path d="M8 2h7M13 0l2 2-2 2" stroke="#1b2f9c" fill="none" />
              <path d="M2 6h14v9H2z" fill="#fff" stroke="#111" />
              <path d="M3 14l5-7M7 14l5-7M11 14l4-6" stroke="#111" strokeWidth="1.4" />
            </Ico>
          </Slot>
          <span />
          <Slot>
            <Ico s={18} v={18}>
              <circle cx="9" cy="9" r="7.5" fill="#fff" stroke="#333" />
              <circle cx="9" cy="9" r="1.6" fill="#d32424" />
              <path d="M9 4v1M9 13v1M4 9h1M13 9h1" stroke="#d35a5a" />
            </Ico>
          </Slot>
          <span />
          <Slot className="bg-[#bdd0ce]">
            <Ico s={18} v={18}>
              <path d="M2 2h14M2 0l-2 2 2 2M16 0l2 2-2 2" stroke="#c81f1f" fill="none" transform="translate(0 1)" />
              <path d="M2 6h14v9H2z" fill="#fff" stroke="#111" />
              <path d="M3 14l5-7M7 14l5-7M11 14l4-6" stroke="#111" strokeWidth="1.4" />
            </Ico>
          </Slot>
          <span />
          <Slot>
            <Ico s={18} v={18}>
              <path d="M3 15q3 0 5-6t7-6" fill="none" stroke="#333" strokeWidth="1.2" />
              <circle cx="3" cy="15" r="2" fill="#c82a2a" />
              <circle cx="9" cy="8" r="2" fill="#c82a2a" />
              <circle cx="15" cy="3" r="2" fill="#c82a2a" />
            </Ico>
          </Slot>
          <span />
        </div>
      </Group>
      <Group w="w-[137px]" label="工件">
        <div className="ml-[10px] flex pt-[1px]">
          <div className="-mt-[5px] grid grid-cols-[24px_24px] grid-rows-[22px_22px_22px]">
            {[0, 1, 2, 3, 4, 5].map((i) => (
              <Slot key={i}>
                <WorkpieceIcon />
              </Slot>
            ))}
          </div>
          <BigBtn w="w-[72px]" icon={<BigIpw />} label="显示 3D IPW" disabled caret />
        </div>
      </Group>
      <Group w="w-[67px]" label="分析">
        <div className="flex pt-[1px]">
          <BigBtn w="w-[67px]" icon={<DraftIcon />} label="拔模分析" caret />
        </div>
      </Group>
      <Group w="w-[130px]" label="几何体" labelClass="mr-[18px]">
        <div className="flex pt-[1px]">
          <BigBtn w="w-[58px]" icon={<PointIcon />} label="点" caret />
          <BigBtn w="w-[58px]" icon={<ExtractIcon />} label="抽取几何特征" caret />
        </div>
      </Group>
      <Group w="w-[144px]" label="同步" last>
        <div className="flex pt-[1px]">
          <BigBtn w="w-[56px]" icon={<MoveFaceIcon />} label="移动面" />
          <div className="flex w-[14px] flex-col items-center gap-[5px]">
            <MoveFaceSmall mark="M6 7h4v6H6z" />
            <MoveFaceSmall mark="M6 7h5v2H6zm0 3h5v3H6z" />
            <MoveFaceSmall mark="M6 7l5 6M11 7l-5 6" />
          </div>
        </div>
      </Group>
      <div className="ml-auto self-end pb-[2px] pr-[6px]">
        <Caret color="#444" />
      </div>
    </div>
  );
}

function Toolbar() {
  return (
    <div className="flex h-[32px] shrink-0 items-center border-b border-[#9d9d9d] bg-white text-[12px] text-[#222]">
      <Slot className="ml-[8px] w-[18px]">
        <Ico s={16} v={16}>
          <path d="M1 3h13M1 7h13M1 11h8" stroke="#456" strokeWidth="1.2" />
          <path d="M9 9l5 5" stroke="#888" strokeWidth="2" />
        </Ico>
      </Slot>
      <Slot className="w-[46px] whitespace-nowrap pl-[6px]">菜单(M)</Slot>
      <Slot className="w-[12px]">
        <Caret />
      </Slot>
      <div className="ml-[2px] h-[18px] w-px bg-[#d0d0d0]" />
      <Slot className="ml-[8px] w-[24px]">
        <NavIcon kind={1} />
      </Slot>
      <Slot className="w-[24px]">
        <NavIcon kind={2} />
      </Slot>
      <Slot className="ml-[3px] h-[22px] w-[24px] bg-[#bdd0ce]">
        <NavIcon kind={3} />
      </Slot>
      <Slot className="w-[22px]">
        <NavIcon kind={4} />
      </Slot>
      <div className="ml-[8px] h-[18px] w-px bg-[#d0d0d0]" />
      <Slot className="ml-[9px] h-[22px] w-[24px] bg-[#bdd0ce]">
        <NavIcon kind={5} />
      </Slot>
      <Slot className="w-[22px]">
        <NavIcon kind={6} />
      </Slot>
      <div className="ml-[8px] h-[18px] w-px bg-[#d0d0d0]" />
      <div className="ml-[12px] flex h-[20px] w-[132px] items-center justify-between border border-[#b5b5b5] pl-[2px] pr-[5px] text-[#b4b4b4]">
        没有选择过滤器
        <Caret color="#bbb" />
      </div>
      <div className="ml-[10px] flex h-[20px] w-[139px] items-center justify-between border border-[#b5b5b5] pl-[2px] pr-[5px] text-[#b4b4b4]">
        整个装配
        <Caret color="#bbb" />
      </div>
      <Slot className="ml-[5px] w-[24px]">
        <SmallGray d="M3 5l5-2v12l-5 2zM10 6h4v4h4v4h-8z" />
      </Slot>
      <Slot className="ml-px w-[24px]">
        <SmallGray d="M3 4l6 1 1 4-4 1zM11 9h7l-3 4v5h-2v-5z" />
      </Slot>
      <Slot className="-ml-px w-[22px]">
        <div className="flex h-[16px] w-[16px] items-center justify-center border border-[#c83232]">
          <svg width="14" height="14" viewBox="0 0 14 14">
            <path d="M5 1v8M1 5h8" stroke="#333" />
            <circle cx="5" cy="5" r="2" fill="none" stroke="#c81f1f" />
            <path d="M7 8h6l-2 3v3H9v-3z" fill="#e6a723" />
          </svg>
        </div>
      </Slot>
      <Slot className="w-[14px]">
        <Caret />
      </Slot>
      <Slot className="w-[24px]">
        <SmallGray d="M10 8v10M5 13h10M5 7q3-5 7-3l-2-2m2 2l-2 2" />
      </Slot>
      <Slot className="w-[22px]">
        <SmallGray d="M2 5l6-2 2 4-4 2zM11 8h6v10h-6zM14 8v10" />
      </Slot>
      <Slot className="ml-[4px] w-[24px]">
        <SmallGray d="M6 4h8l4 6-4 6H6l-4-6zM10 9v2" />
      </Slot>
      <Slot className="w-[24px]">
        <svg width="17" height="17" viewBox="0 0 17 17">
          <rect x="1.5" y="1.5" width="14" height="14" fill="none" stroke="#aaa" strokeDasharray="2 1.5" />
        </svg>
      </Slot>
      <Slot className="w-[12px]">
        <Caret />
      </Slot>
      <Slot className="ml-[3px] w-[24px]">
        <SmallGray d="M2 11l5-6h9l2 3-3 7H5zM7 5l8 3v7" />
      </Slot>
      <Slot className="w-[22px]">
        <Ico s={18} v={18}>
          <path d="M2 5l7-3 7 3v9l-7 3-7-3z" fill="#63b3e8" stroke="#3a7fb8" />
          <path d="M2 5l7 3 7-3M9 8v9" stroke="#cfeafa" fill="none" />
          <path d="M9 2v6" stroke="#d83a3a" />
        </Ico>
      </Slot>
      <div className="ml-[9px] h-[18px] w-px bg-[#d0d0d0]" />
      <Slot className="ml-[7px] w-[24px]">
        <Ico s={18} v={18}>
          <rect x="2" y="2" width="14" height="14" fill="#eef3fb" stroke="#2f46b0" strokeDasharray="2 1" />
          <circle cx="8" cy="8" r="4" fill="#fff" stroke="#555" />
          <path d="M11 11l4 4" stroke="#555" strokeWidth="1.6" />
        </Ico>
      </Slot>
      <Slot className="ml-px w-[24px]">
        <Ico s={18} v={18}>
          <rect x="1" y="2" width="16" height="12" fill="#e8eef8" stroke="#6c7fa8" />
          <path d="M9 8h5v8H9z" fill="#e6bb8a" stroke="#a06a35" />
        </Ico>
      </Slot>
      <Slot className="w-[24px]">
        <Ico s={18} v={18}>
          <path d="M3 9a6 6 0 0 1 10-4l2-1v5h-5l2-2" fill="none" stroke="#3060b8" strokeWidth="1.6" />
          <path d="M15 9a6 6 0 0 1-10 4l-2 1V9h5l-2 2" fill="none" stroke="#555" strokeWidth="1.6" />
        </Ico>
      </Slot>
      <Slot className="ml-[3px] w-[24px]">
        <Ico s={18} v={18}>
          <rect x="2" y="2" width="14" height="14" fill="#f3f6fb" stroke="#3f5fb8" />
          <path d="M5 6h3M10 6h3M5 11h3M10 11h3" stroke="#d32a2a" strokeWidth="2" />
        </Ico>
      </Slot>
      <Slot className="w-[12px]">
        <Caret />
      </Slot>
      <Slot className="w-[22px]">
        <Ico s={18} v={18}>
          <path d="M2 11l7-8 7 5-5 6-7 1z" fill="#8b8b8b" stroke="#444" />
          <path d="M4 11l7-1" stroke="#ddd" />
        </Ico>
      </Slot>
      <Slot className="w-[16px]">
        <Caret />
      </Slot>
      <Slot className="w-[24px]">
        <Ico s={18} v={18}>
          <path d="M2 5l7-3 7 3v9l-7 3-7-3z" fill="#7f9fd8" stroke="#50709f" />
          <path d="M2 5l7 3v9l-7-3z" fill="#a7bfe8" />
        </Ico>
      </Slot>
      <Slot className="w-[12px]">
        <Caret />
      </Slot>
      <Slot className="w-[22px]">
        <Ico s={18} v={18}>
          <path d="M9 4l7 5-7 5-4-5z" fill="#6f9fd8" stroke="#456" />
          <path d="M4 3v7" stroke="#20a040" strokeWidth="2" />
          <path d="M1 9l5 2-5 3z" fill="#d82a2a" />
        </Ico>
      </Slot>
      <Slot className="w-[16px]">
        <Caret />
      </Slot>
      <div className="ml-[5px] h-[18px] w-px bg-[#d0d0d0]" />
      <div className="ml-auto self-end pb-[4px] pr-[6px]">
        <Caret color="#444" />
      </div>
    </div>
  );
}

function Triad() {
  return (
    <svg width="200" height="210" viewBox="0 0 600 630" className="absolute left-[440px] top-[270px]">
      <path d="M135 260L290 212V400L415 458L262 505V320z" fill="none" stroke="#3050e0" strokeWidth="2" strokeDasharray="5 1" />
      <path d="M290 212V400" stroke="#9aa8ea" strokeWidth="5" />
      <path d="M262 320V505" stroke="#1c3fc8" strokeWidth="3" />
      <path d="M135 445V215" stroke="#0f46c4" strokeWidth="7" />
      <path d="M135 215V100" stroke="#9aaae0" strokeWidth="6" />
      <path d="M123 215l12-55 12 55z" fill="#0f46c4" />
      <path d="M125 122l10-42 10 42z" fill="#0a2a9c" />
      <path d="M135 445L340 390" stroke="#3d9a2e" strokeWidth="6" />
      <path d="M325 378l60-5-55 24z" fill="#3fa040" />
      <path d="M380 373L445 352" stroke="#1228c8" strokeWidth="2" strokeDasharray="4 3" />
      <path d="M403 360l42-8-34 18z" fill="#0a2aa0" />
      <path d="M135 445L300 520" stroke="#c63a36" strokeWidth="5" />
      <path d="M285 512l48 24-50-5z" fill="#cf3b36" />
      <path d="M330 535L385 562" stroke="#1228c8" strokeWidth="2" strokeDasharray="4 3" />
      <path d="M352 542l34 20-38-8z" fill="#0a2aa0" />
      <path d="M120 445h30M135 430v30" stroke="#9aa8ea" strokeWidth="3" />
      <text x="122" y="72" fontSize="34" fill="#2a4fd0" fontFamily="Liberation Sans">Z</text>
      <text x="148" y="154" fontSize="34" fill="#2a6fe0" fontFamily="Liberation Sans">ZM</text>
      <text x="330" y="360" fontSize="34" fill="#4a9a50" fontFamily="Liberation Sans">YM</text>
      <text x="450" y="362" fontSize="34" fill="#1c3fc8" fontFamily="Liberation Sans">Y</text>
      <text x="280" y="574" fontSize="34" fill="#d0403c" fontFamily="Liberation Sans">XM</text>
      <text x="390" y="584" fontSize="34" fill="#1c3fc8" fontFamily="Liberation Sans">X</text>
    </svg>
  );
}

function MiniTriad() {
  return (
    <svg width="110" height="110" viewBox="0 0 330 330" className="absolute left-[30px] top-[700px]">
      <path d="M110 135l60-18 50 23v70l-60 20-50-22z" fill="#c9cbcd" fillOpacity="0.6" stroke="#b2b4b6" strokeWidth="3" />
      <path d="M170 117v70M110 135l50 22v73M160 157l60-17M110 210l60-23 50 23" fill="none" stroke="#bcbebf" strokeWidth="3" />
      <path d="M108 208L215 178" stroke="#adc7ad" strokeWidth="7" />
      <text x="218" y="186" fontSize="28" fill="#9ac09a" fontFamily="Liberation Sans">Y</text>
      <path d="M108 210V110" stroke="#1238c0" strokeWidth="8" />
      <path d="M97 118l11-30 11 30z" fill="#0a2aa0" />
      <text x="98" y="82" fontSize="30" fill="#3a5ad8" fontFamily="Liberation Sans">Z</text>
      <path d="M99 84h18" stroke="#3a5ad8" strokeWidth="2" />
      <path d="M108 210L170 240" stroke="#c72a2a" strokeWidth="8" />
      <path d="M160 230l35 18-40-2z" fill="#c72a2a" />
      <text x="193" y="266" fontSize="28" fill="#d0504c" fontFamily="Liberation Sans">X</text>
      <circle cx="106" cy="210" r="11" fill="#cfd0d2" stroke="#888" />
    </svg>
  );
}

function Viewport() {
  return (
    <div className="relative w-[970px] shrink-0 bg-linear-to-b from-[#b3b4b6] via-[#d6d7d9] via-50% to-[#e8e9eb]">
      <Triad />
      <MiniTriad />
    </div>
  );
}

function FolderIcon() {
  return (
    <svg width="15" height="14" viewBox="0 0 15 14" className="shrink-0">
      <path d="M0.500 3V1.500h5l1 1.500h8v10h-14z" fill="#f4d97c" stroke="#a5883a" />
      <rect x="7" y="4.500" width="7" height="8" fill="#fff" stroke="#1b2fb8" strokeWidth="1.2" />
      <path d="M8.500 6.500h4v2h-4v2h4" fill="none" stroke="#1b2fb8" />
    </svg>
  );
}

function McsIcon() {
  return (
    <svg width="16" height="16" viewBox="0 0 16 16" className="shrink-0">
      <path d="M4 13V3" stroke="#1b2fb8" strokeWidth="1.4" />
      <path d="M4 12l6-3" stroke="#2f9a3a" strokeWidth="1.6" />
      <path d="M1 10l9 5" stroke="#c82a2a" strokeWidth="2" strokeDasharray="3 1" />
      <text x="6" y="6" fontSize="6" fontWeight="700" fill="#222" fontFamily="Liberation Sans">Z</text>
      <text x="12" y="7" fontSize="6" fontWeight="700" fill="#222" fontFamily="Liberation Sans">Y</text>
      <text x="11" y="16" fontSize="6" fontWeight="700" fill="#222" fontFamily="Liberation Sans">X</text>
    </svg>
  );
}

function McsRow({ label, plus }: { label: string; plus?: boolean }) {
  return (
    <div className="flex items-center pl-[5px]">
      {plus ? (
        <span className="flex h-[9px] w-[9px] items-center justify-center border border-[#bbb] bg-white text-[9px] leading-none text-[#111]">+</span>
      ) : (
        <span className="ml-[4px] w-[5px] border-t border-dotted border-[#777]" />
      )}
      <span className="w-[6px] border-t border-dotted border-[#777]" />
      <McsIcon />
      <span className="ml-[3px] text-[12.5px]">{label}</span>
    </div>
  );
}

function Navigator() {
  return (
    <div className="flex w-[918px] shrink-0 flex-col border-l border-[#9d9d9d] bg-white text-[12px] text-[#333]">
      <div className="flex h-[30px] shrink-0 items-center pl-[12px]">
        <div className="h-[12px] w-[13px] border border-t-[2px] border-[#222]" />
        <span className="ml-[10px] text-[12px] text-[#222]">工序导航器 - 程序顺序</span>
      </div>
      <div className="ml-[10px] flex h-[747px] w-[901px] shrink-0 flex-col overflow-hidden border border-b-0 border-[#dcdcdc]">
        <div className="flex h-[20px] shrink-0 border-b-2 border-[#d6d6d6] bg-[#efefef] pt-[2px]">
          {["名称", "", "", "", "", "", "", "速度", "时间", ""].map((h, i) => (
            <div key={i} className={`flex items-center border-r-2 border-[#dedede] pl-[6px] text-[12px] ${columns[i]}`}>
              {h}
            </div>
          ))}
        </div>
        {rows.map((r) => (
          <div key={r} className={`flex h-[20px] shrink-0 border-b-2 border-[#efefef] ${r % 2 === 1 ? "bg-[#f8f8f8]" : "bg-white"}`}>
            {columns.map((c, i) => (
              <div key={c} className={`flex items-center overflow-hidden whitespace-nowrap border-r-2 border-[#efefef] pt-px ${c}`}>
                {i === 0 && r === 0 && <span className="pl-[3px] text-[13px]">GEOMETRY</span>}
                {i === 0 && r === 1 && (
                  <div className="flex items-center pl-[9px]">
                    <span className="w-[11px] border-t border-dotted border-[#777]" />
                    <FolderIcon />
                    <span className="ml-[3px]">未用项</span>
                  </div>
                )}
                {i === 0 && r === 2 && <McsRow label="MCS_1" plus />}
                {i === 0 && r === 3 && <McsRow label="MCS-2" />}
                {i === 8 && r < 4 && <span className="pl-[5px]">{times[r]}</span>}
              </div>
            ))}
          </div>
        ))}
      </div>
      <div className="ml-[10px] mr-[6px] h-[7px] shrink-0 border-b-[3px] border-[#9e9e9e]" />
      <div className="ml-[10px] mr-[6px] flex h-[25px] shrink-0 items-center justify-between border-b-[3px] border-[#d4d4d4] pl-[6px] pr-[7px]">
        <span className="text-[14px] text-[#3b8fc4]">相依性</span>
        <Chevron />
      </div>
      <div className="ml-[10px] mr-[6px] flex h-[24px] shrink-0 items-center justify-between border-b-[3px] border-[#d4d4d4] pl-[6px] pr-[7px]">
        <span className="text-[14px] text-[#3b8fc4]">细节</span>
        <Chevron />
      </div>
    </div>
  );
}

function SideStrip() {
  const lower = [
    { k: 4, c: "mt-[2px]" },
    { k: 5, c: "-mt-[2px]" },
    { k: 6, c: "mt-[3px]" },
    { k: 7, c: "mt-[14px]" },
    { k: 8, c: "mt-[16px]" },
    { k: 9, c: "mt-[12px]" },
    { k: 10, c: "mt-[5px]" },
    { k: 11, c: "mt-[1px]" },
    { k: 12, c: "mt-0" },
    { k: 13, c: "mt-[2px]" },
  ];
  return (
    <div className="flex w-[32px] shrink-0 flex-col border-l-2 border-[#ababab] bg-[#d9d9d9]">
      <Slot className="h-[26px]">
        <svg width="14" height="14" viewBox="0 0 14 14">
          <circle cx="7" cy="7" r="5" fill="none" stroke="#444" strokeWidth="1.6" />
          <path d="M7 0v2M7 12v2M0 7h2M12 7h2M2 2l1.4 1.4M10.6 10.6L12 12M12 2l-1.4 1.4M3.4 10.6L2 12" stroke="#444" strokeWidth="1.4" />
        </svg>
      </Slot>
      <Slot className="mt-[17px] h-[40px] pr-[4px]">
        <SideIcon kind={0} />
      </Slot>
      <Slot className="mt-px h-[40px] pr-[4px]">
        <SideIcon kind={1} />
      </Slot>
      <Slot className="mt-[6px] h-[36px] pr-[4px]">
        <SideIcon kind={2} />
      </Slot>
      <Slot className="-ml-[2px] h-[46px] w-[32px] border border-l-0 border-[#ababab] bg-white pr-[2px]">
        <SideIcon kind={3} />
      </Slot>
      {lower.map((it) => (
        <Slot key={it.k} className={`h-[40px] pr-[4px] ${it.c}`}>
          <SideIcon kind={it.k} />
        </Slot>
      ))}
    </div>
  );
}

function Dialog() {
  return (
    <div className="absolute left-[1072px] top-0 flex h-[675px] w-[458px] flex-col border-x border-b border-[#a9a9a9] bg-[#e6e6e6] text-[12px] text-[#333]">
      <div className="flex h-[24px] shrink-0 items-center bg-[#5d8781] pl-[8px] pr-[9px] text-white">
        <svg width="14" height="14" viewBox="0 0 14 14">
          <circle cx="7" cy="7" r="4.400" fill="none" stroke="#fff" strokeWidth="2.4" />
          <path d="M7 0v2M7 12v2M0 7h2M12 7h2M2 2l1.400 1.400M10.600 10.600L12 12M12 2l-1.400 1.400M3.400 10.600L2 12" stroke="#fff" strokeWidth="1.6" />
        </svg>
        <span className="ml-[11px] text-[13px]">创建工序</span>
        <svg width="12" height="12" viewBox="0 0 12 12" className="ml-auto">
          <path d="M1 1l10 10M11 1L1 11" stroke="#fff" strokeWidth="2" />
        </svg>
      </div>
      <div className="mx-[5px] mt-[4px] h-[63px] shrink-0 border-b border-[#cfcfcf] bg-white">
        <SectionHead label="类型" className="h-[26px]" />
        <Select value="Mr.12.0" className="ml-[9px] mt-[4px] h-[25px] w-[428px]" />
      </div>
      <div className="mx-[5px] mt-[4px] h-[320px] shrink-0 border-b border-[#cfcfcf] bg-white">
        <SectionHead label="工序子类型" className="h-[26px]" />
        <div className="ml-[13px] mt-[6px] grid grid-cols-[repeat(6,70px)] auto-rows-[70px]">
          {[<SubCyan key="a" />, <SubCyan key="b" />, <SubArc key="c" />, <SubArc key="d" />, <SubArc key="e" />, <SubBlock key="f" />].map((n, i) => (
            <Slot key={i}>{n}</Slot>
          ))}
          {[0, 1, 2, 3, 4].map((i) => (
            <Slot key={i}>
              <SubPocket />
            </Slot>
          ))}
          <Slot>
            <SubDrill />
          </Slot>
          {[0, 1, 2].map((i) => (
            <Slot key={i}>
              <SubDrill />
            </Slot>
          ))}
          <Slot>
            <div className="flex h-[68px] w-[68px] flex-col items-center border-[4px] border-[#bdd0ce] bg-white pt-[1px]">
              <HelixTile />
              <span className="mt-[1px] whitespace-nowrap text-[11px] font-bold leading-[14px] tracking-[2px] text-[#555]">螺旋铣孔</span>
            </div>
          </Slot>
          <Slot>
            <div className="flex flex-col items-center">
              <SpotTile />
              <span className="mt-[1px] whitespace-pre text-[11px] font-bold leading-[14px] text-[#555]">打   点</span>
            </div>
          </Slot>
          <Slot>
            <SubPen />
          </Slot>
          <Slot>
            <SubPen />
          </Slot>
        </div>
      </div>
      <div className="mx-[5px] mt-[4px] h-[144px] shrink-0 border-b border-[#cfcfcf] bg-white">
        <SectionHead label="位置" className="h-[25px]" />
        <div className="mt-[4px] flex h-[27px] items-center justify-between pl-[9px] pr-[8px]">
          程序
          <Select value="NC_PROGRAM" className="h-[25px] w-[141px]" />
        </div>
        <div className="flex h-[27px] items-center justify-between pl-[9px] pr-[8px]">
          刀具
          <Select value="D10 (铣刀-5 参数)" active className="h-[25px] w-[141px]" />
        </div>
        <div className="flex h-[27px] items-center pl-[9px]">几何体</div>
        <div className="flex h-[27px] items-center pl-[9px]">方法</div>
      </div>
      <div className="mx-[5px] mt-[4px] h-[61px] shrink-0 bg-white">
        <SectionHead label="名称" open={false} className="h-[26px]" />
        <div className="ml-[9px] mt-[4px] flex h-[24px] w-[428px] items-center border border-[#ababab] pl-[4px]">螺旋铣孔_1</div>
      </div>
      <div className="ml-[269px] mt-[12px] flex">
        <div className="flex h-[25px] w-[78px] items-center border border-[#5aa7d8] bg-[#9ccbe6] pl-[14px]">确定</div>
      </div>
    </div>
  );
}

function ToolDropdown() {
  return (
    <div className="absolute left-[1374px] top-[501px] flex h-[344px] w-[184px] border border-[#9e9e9e] bg-white text-[12.5px] text-[#333]">
      <div className="flex-1 overflow-hidden">
        {toolItems.map((t, i) => (
          <div key={t} className={`h-[19px] whitespace-nowrap pl-[2px] leading-[19px] ${i === 0 ? "bg-[#3b99fc] text-white" : ""}`}>
            {t}
          </div>
        ))}
      </div>
      <div className="flex w-[16px] shrink-0 flex-col bg-[#f0f0f0]">
        <Slot className="h-[17px]">
          <svg width="9" height="6" viewBox="0 0 9 6">
            <path d="M1 5l3.500-4L8 5" fill="none" stroke="#555" strokeWidth="1.6" />
          </svg>
        </Slot>
        <div className="h-[142px] bg-[#c9c9c9]" />
        <Slot className="mt-auto h-[17px]">
          <svg width="9" height="6" viewBox="0 0 9 6">
            <path d="M1 1l3.500 4L8 1" fill="none" stroke="#555" strokeWidth="1.6" />
          </svg>
        </Slot>
      </div>
    </div>
  );
}

function SogouBar() {
  return (
    <div className="absolute left-[1807px] top-[900px] flex h-[26px] w-[105px] items-center">
      <div className="absolute left-[22px] top-[1px] h-[24px] w-[83px] border border-[#c5daf0] bg-white" />
      <div className="relative flex h-[27px] w-[29px] -rotate-12 items-center justify-center rounded-[3px] bg-[#f2581f] text-[25px] font-bold italic leading-none text-white">S</div>
      <span className="relative ml-[9px] font-['Liberation_Sans',sans-serif] text-[20px] leading-none text-[#1a78d6]">A</span>
      <span className="relative ml-[9px] font-['Liberation_Sans',sans-serif] text-[20px] font-bold leading-none text-[#1a78d6]">Ω</span>
      <div className="relative ml-[9px] grid grid-cols-2 gap-[1px]">
        <div className="h-[6px] w-[6px] rounded-[1px] bg-[#1a78d6]" />
        <div className="h-[6px] w-[6px] rounded-full bg-[#1a78d6]" />
        <div className="h-[6px] w-[6px] rounded-[1px] bg-[#1a78d6]" />
        <div className="h-[6px] w-[6px] rounded-[1px] bg-[#1a78d6]" />
      </div>
    </div>
  );
}

function StatusBar() {
  return (
    <div className="flex h-[22px] shrink-0 items-center justify-between border-t border-[#ababab] bg-white pl-[3px] pr-[55px] text-[12px] text-[#222]">
      选择类型、子类型、位置，并指定工序名称
      <ScreenIcon />
    </div>
  );
}

function Taskbar() {
  const underline = "absolute bottom-0 left-0 right-0 h-[2px] bg-[#6aa9dc]";
  return (
    <div className="relative flex h-[40px] shrink-0 items-center bg-linear-to-r from-[#23383f] to-[#1a2a45] text-white">
      <Slot className="w-[48px]">
        <svg width="17" height="17" viewBox="0 0 17 17">
          <path d="M0 2.500l7-1V8H0zM8 1.300L17 0v8H8zM0 9h7v6.500l-7-1zM8 9h9v8l-9-1.300z" fill="#fff" />
        </svg>
      </Slot>
      <div className="ml-[7px] h-[16px] w-[3px] border-x border-[#5a6a72]" />
      <Slot className="relative ml-[17px] h-full w-[40px]">
        <div className="relative h-[24px] w-[22px]">
          <div className="absolute bottom-0 left-0 h-[20px] w-[20px] bg-[#0f9a9a]" />
          <div className="absolute right-0 top-0 flex h-[20px] w-[21px] items-center justify-center bg-[#8f1414] font-['Liberation_Sans',sans-serif] text-[10px] font-bold">NX</div>
        </div>
        <div className={underline} />
      </Slot>
      <Slot className="relative ml-[5px] h-full w-[48px] bg-[#4b5b63]">
        <svg width="26" height="26" viewBox="0 0 26 26">
          <circle cx="11" cy="14" r="9" fill="#2b8fe0" />
          <path d="M11 5a9 9 0 0 1 8 9l-8 0z" fill="#1a6fb8" />
          <circle cx="10" cy="18" r="4" fill="#35a050" />
          <path d="M1 22q14 2 22-13 2-4 0-5 6 5-4 15-8 6-18 3z" fill="#eda52c" />
          <path d="M4 1l11 0-3 10z" fill="#d8344a" />
        </svg>
        <div className={underline} />
      </Slot>
      <Slot className="relative ml-[5px] h-full w-[40px]">
        <svg width="22" height="20" viewBox="0 0 22 20">
          <path d="M0 2h8l2 2h12v16H0z" fill="#f6c445" />
          <path d="M0 2h8l2 2H0z" fill="#e8a92a" />
          <path d="M6 12h10v8h-3v-4H9v4H6z" fill="#3b8fd8" />
        </svg>
        <div className={underline} />
      </Slot>
      <Slot className="relative ml-[9px] h-full w-[40px]">
        <svg width="24" height="24" viewBox="0 0 24 24">
          <circle cx="12" cy="12" r="11" fill="#fff" />
          <circle cx="12" cy="12" r="9.400" fill="#58b52e" />
          <text x="12" y="18" textAnchor="middle" fontSize="17" fontWeight="700" fill="#fff" fontFamily="Liberation Sans">e</text>
        </svg>
        <div className={underline} />
      </Slot>
      <div className="ml-auto flex h-full items-center pr-[5px]">
        <div className="flex w-[60px] flex-col items-center text-[12px] leading-[17px] text-[#e8edf2]">
          <span>51℃</span>
          <span>CPU温度</span>
        </div>
        <Slot className="ml-[5px] w-[23px]">
          <svg width="13" height="8" viewBox="0 0 13 8">
            <path d="M1 7l5.500-6L12 7" fill="none" stroke="#fff" />
          </svg>
        </Slot>
        <Slot className="w-[25px]">
          <svg width="14" height="14" viewBox="0 0 14 14">
            <path d="M1 13a12 12 0 0 1 12-12M4 13a9 9 0 0 1 9-9M7 13a6 6 0 0 1 6-6" fill="none" stroke="#dde3e8" />
            <circle cx="12" cy="12" r="1.400" fill="#fff" />
          </svg>
        </Slot>
        <Slot className="w-[21px]">
          <div className="flex h-[15px] w-[15px] items-center justify-center rounded-full bg-[#e2c323] text-[13px] font-bold leading-none text-[#127a1f]">+</div>
        </Slot>
        <Slot className="ml-[2px] w-[24px]">
          <svg width="16" height="14" viewBox="0 0 16 14">
            <path d="M1 4.500h3L7 1v12L4 9.500H1z" fill="none" stroke="#e4e8ec" />
            <path d="M10 3q2 4 0 8M12 1q3 6 0 12" fill="none" stroke="#e4e8ec" />
          </svg>
        </Slot>
        <Slot className="w-[22px] text-[13px] text-[#e8edf2]">A</Slot>
        <Slot className="ml-[5px] w-[23px]">
          <div className="flex h-[21px] w-[21px] items-center justify-center rounded-full border-2 border-[#18c35f] border-r-[#1a2a45] text-[11px] leading-none">14</div>
        </Slot>
        <div className="ml-[3px] flex w-[80px] flex-col items-center text-[12px] leading-[17px] text-[#e8edf2]">
          <span>14:28</span>
          <span>2024/6/26</span>
        </div>
        <Slot className="ml-[5px] w-[16px]">
          <div className="h-[14px] w-[15px] border border-[#e4e8ec]" />
        </Slot>
        <div className="ml-[20px] h-full w-px bg-[#55636f]" />
      </div>
      <span className="absolute left-[1718px] top-[18px] whitespace-nowrap font-['Liberation_Serif','Noto_Sans_CJK_SC',serif] text-[15px] leading-[18px] tracking-[1px] text-[#aab2ba]">UG爱好者论坛 @      34452101</span>
    </div>
  );
}

export default function App() {
  return (
    <div className="relative flex h-[1080px] w-[1920px] flex-col overflow-hidden bg-white font-['Open_Sans','Noto_Sans_CJK_SC',sans-serif]">
      <TitleBar />
      <TabBar />
      <Ribbon />
      <Toolbar />
      <div className="flex min-h-0 flex-1">
        <Viewport />
        <Navigator />
        <SideStrip />
      </div>
      <StatusBar />
      <Taskbar />
      <Dialog />
      <ToolDropdown />
      <SogouBar />
    </div>
  );
}
